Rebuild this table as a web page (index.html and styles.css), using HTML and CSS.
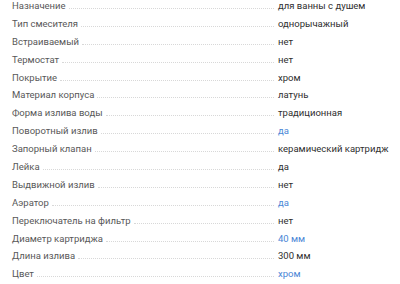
FILE: index.html
```html
<!DOCTYPE html>
<html lang="ru">
<head>
<meta charset="utf-8">
<link rel="stylesheet" href="styles.css">
</head>
<body>
<dl class="specs">
  <div class="row"><dt class="label"><span>Назначение</span></dt><dd class="value">для ванны с душем</dd></div>
  <div class="row"><dt class="label"><span>Тип смесителя</span></dt><dd class="value">однорычажный</dd></div>
  <div class="row"><dt class="label"><span>Встраиваемый</span></dt><dd class="value">нет</dd></div>
  <div class="row"><dt class="label"><span>Термостат</span></dt><dd class="value">нет</dd></div>
  <div class="row"><dt class="label"><span>Покрытие</span></dt><dd class="value">хром</dd></div>
  <div class="row"><dt class="label"><span>Материал корпуса</span></dt><dd class="value">латунь</dd></div>
  <div class="row"><dt class="label"><span>Форма излива воды</span></dt><dd class="value">традиционная</dd></div>
  <div class="row"><dt class="label"><span>Поворотный излив</span></dt><dd class="value"><a class="link" href="#">да</a></dd></div>
  <div class="row"><dt class="label"><span>Запорный клапан</span></dt><dd class="value">керамический картридж</dd></div>
  <div class="row"><dt class="label"><span>Лейка</span></dt><dd class="value">да</dd></div>
  <div class="row"><dt class="label"><span>Выдвижной излив</span></dt><dd class="value">нет</dd></div>
  <div class="row"><dt class="label"><span>Аэратор</span></dt><dd class="value"><a class="link" href="#">да</a></dd></div>
  <div class="row"><dt class="label"><span>Переключатель на фильтр</span></dt><dd class="value">нет</dd></div>
  <div class="row"><dt class="label"><span>Диаметр картриджа</span></dt><dd class="value"><a class="link" href="#">40 мм</a></dd></div>
  <div class="row"><dt class="label"><span>Длина излива</span></dt><dd class="value">300 мм</dd></div>
  <div class="row"><dt class="label"><span>Цвет</span></dt><dd class="value"><a class="link" href="#">хром</a></dd></div>
</dl>
</body>
</html>
```
FILE: styles.css
```css
html, body {
  margin: 0;
  padding: 0;
  background: #fff;
}
body {
  font-family: Roboto, "Liberation Sans", sans-serif;
  font-size: 9.5px;
  color: #333;
  overflow: hidden;
}
.specs {
  margin: -3px 0 0 0;
  padding: 0 0 0 12px;
}
.row {
  display: flex;
  align-items: baseline;
  height: 17.9px;
  line-height: 17.9px;
}
.label {
  flex: 0 0 262px;
  display: flex;
  align-items: baseline;
  color: #585858;
  margin: 0 4px 0 0;
}
.label::after {
  content: "";
  flex: 1;
  margin-left: 3px;
  border-bottom: 1px dotted #d8d8d8;
}
.value {
  margin: 0;
  color: #2e2e2e;
  white-space: nowrap;
}
.link {
  color: #4a86d6;
  text-decoration: none;
}
```
